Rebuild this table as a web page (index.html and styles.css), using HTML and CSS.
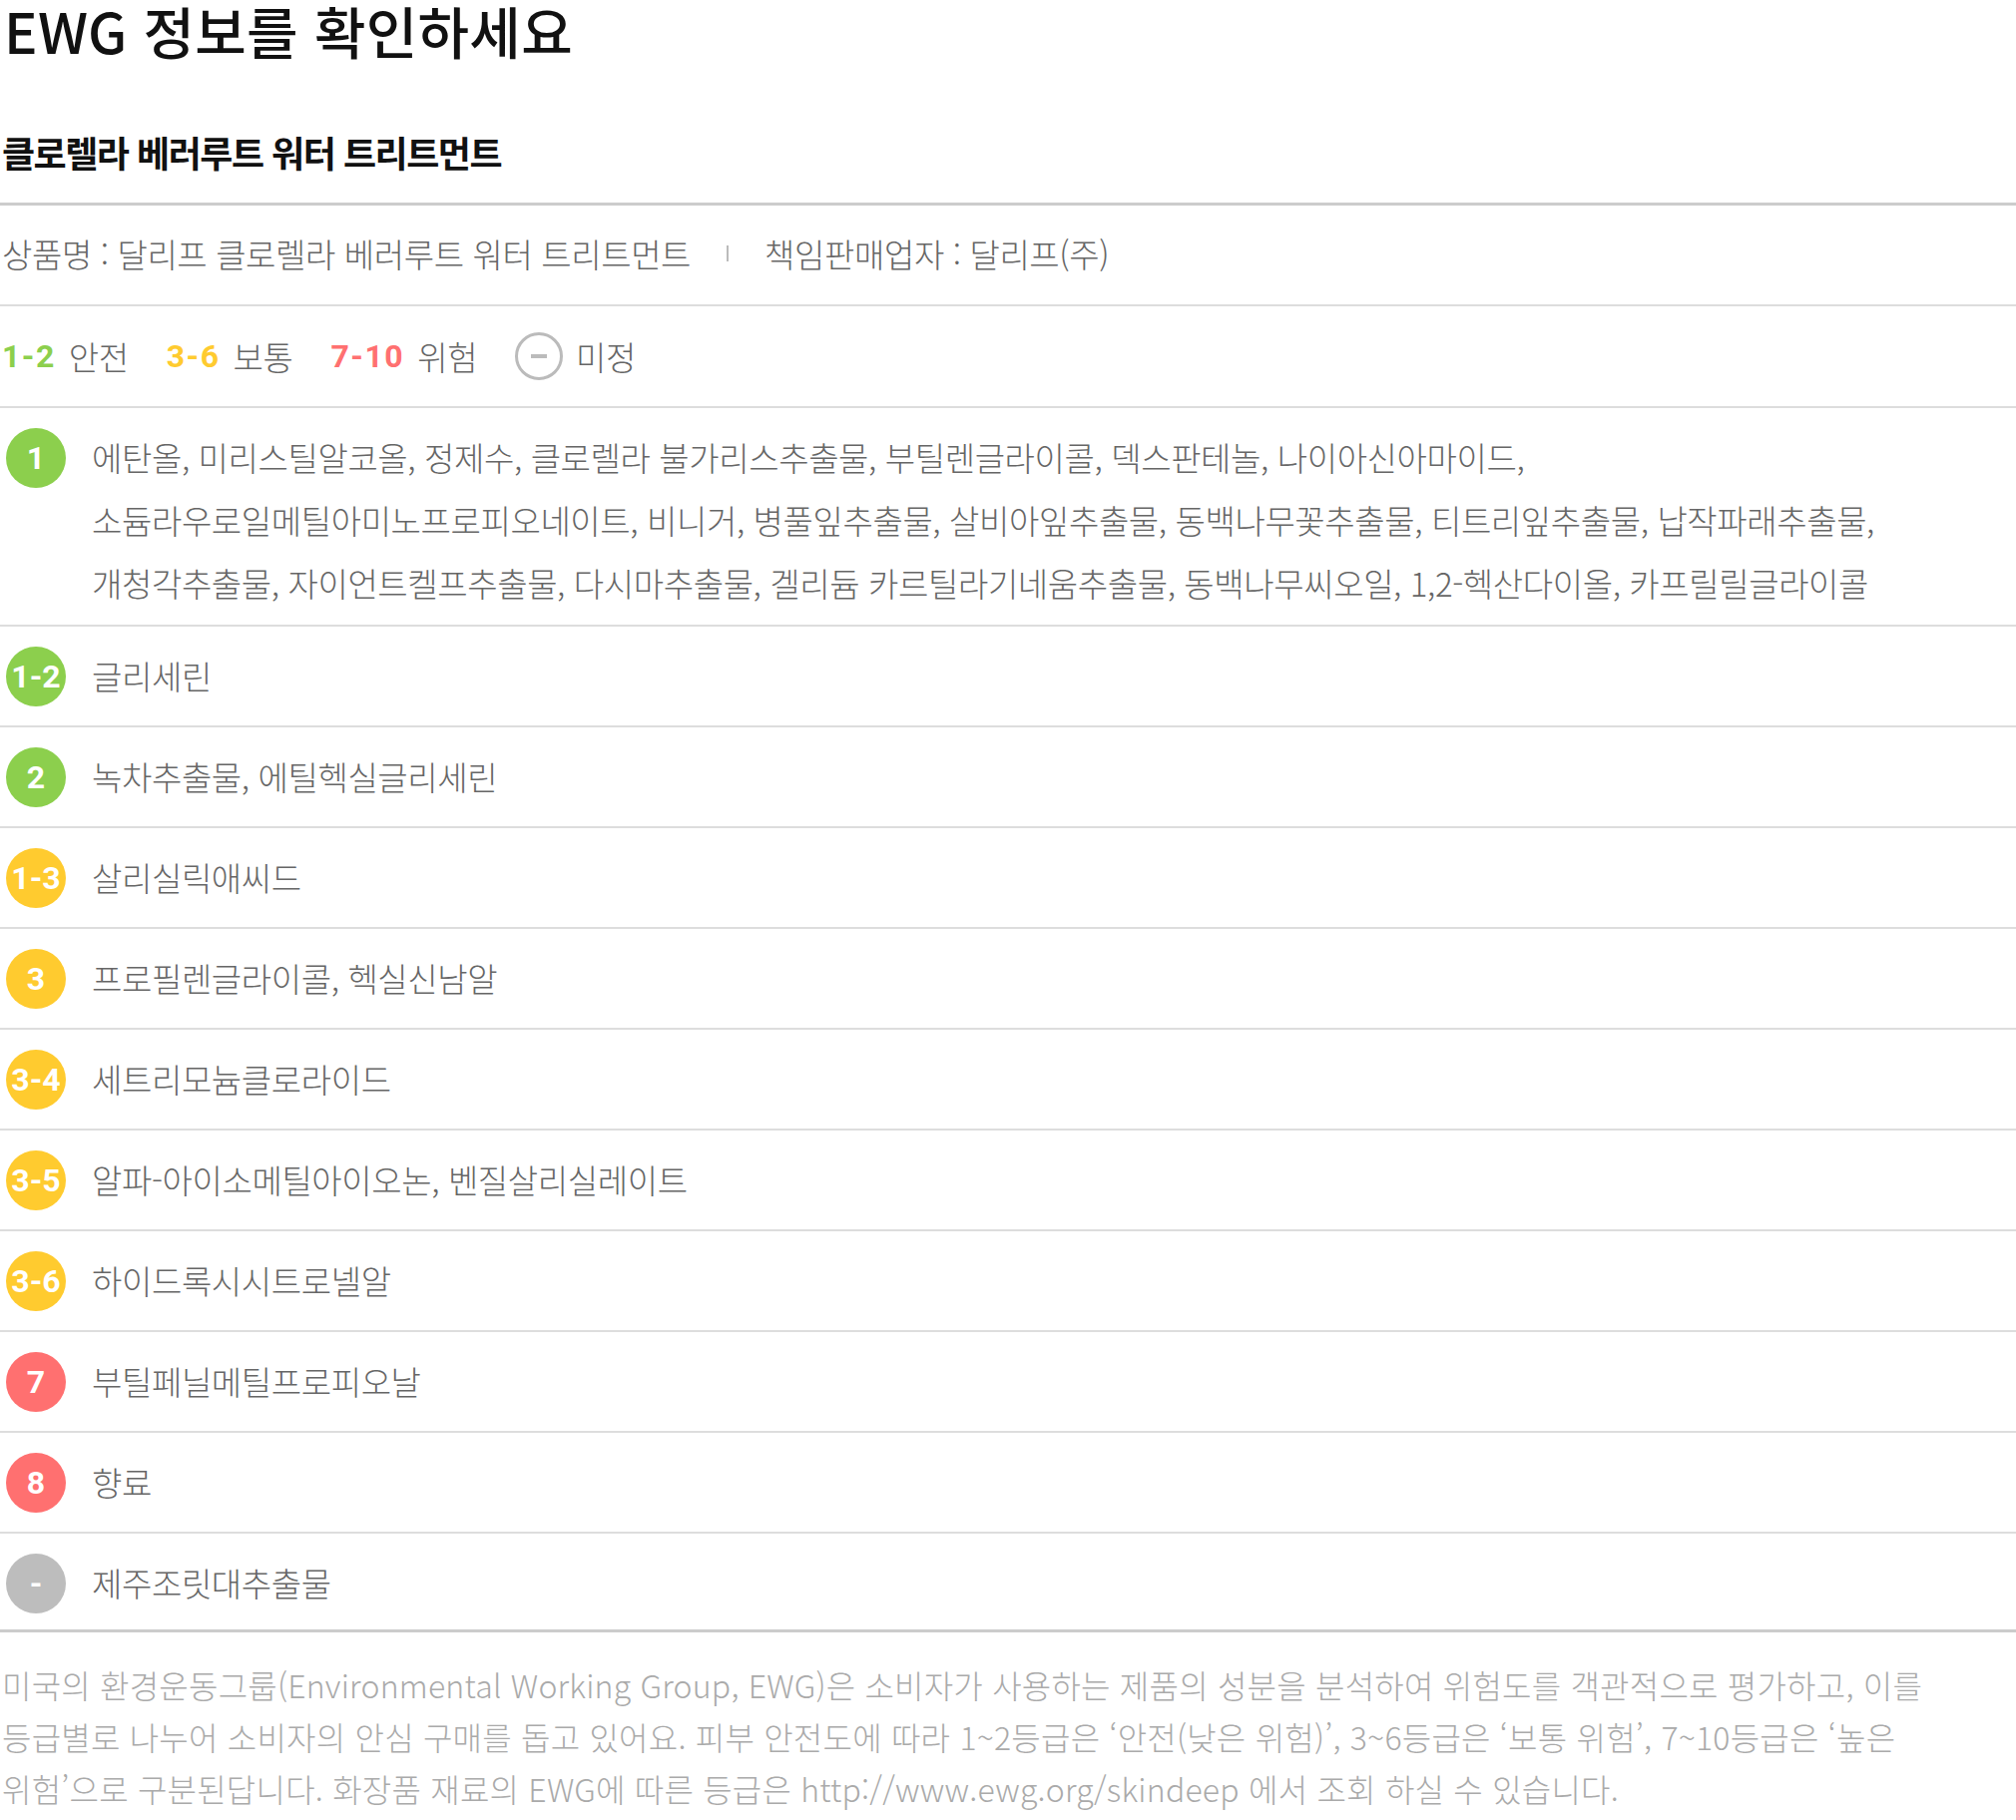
FILE: index.html
```html
<!DOCTYPE html>
<html lang="ko">
<head>
    <meta charset="UTF-8">
    <meta name="viewport" content="width=device-width, initial-scale=1.0">
    <title>EWG 정보</title>
    <link rel="stylesheet" href="styles.css">
</head>
<body>
    <div class="ewg">
        <h1 class="ewg-title">EWG 정보를 확인하세요</h1>
        <h2 class="product-name">클로렐라 베러루트 워터 트리트먼트</h2>

        <div class="product-info">
            <span>상품명 : 달리프 클로렐라 베러루트 워터 트리트먼트</span>
            <span class="divider"></span>
            <span>책임판매업자 : 달리프(주)</span>
        </div>

        <div class="legend">
            <span class="legend-item"><b class="legend-num safe">1-2</b>안전</span>
            <span class="legend-item"><b class="legend-num moderate">3-6</b>보통</span>
            <span class="legend-item"><b class="legend-num high">7-10</b>위험</span>
            <span class="legend-item"><i class="none-icon"></i>미정</span>
        </div>

        <ul class="ingredients">
            <li class="ingredient">
                <span class="grade grade-safe">1</span>
                <p class="ingredient-names">에탄올, 미리스틸알코올, 정제수, 클로렐라 불가리스추출물, 부틸렌글라이콜, 덱스판테놀, 나이아신아마이드, 소듐라우로일메틸아미노프로피오네이트, 비니거, 병풀잎추출물, 살비아잎추출물, 동백나무꽃추출물, 티트리잎추출물, 납작파래추출물, 개청각추출물, 자이언트켈프추출물, 다시마추출물, 겔리듐 카르틸라기네움추출물, 동백나무씨오일, 1,2-헥산다이올, 카프릴릴글라이콜</p>
            </li>
            <li class="ingredient">
                <span class="grade grade-safe">1-2</span>
                <p class="ingredient-names">글리세린</p>
            </li>
            <li class="ingredient">
                <span class="grade grade-safe">2</span>
                <p class="ingredient-names">녹차추출물, 에틸헥실글리세린</p>
            </li>
            <li class="ingredient">
                <span class="grade grade-moderate">1-3</span>
                <p class="ingredient-names">살리실릭애씨드</p>
            </li>
            <li class="ingredient">
                <span class="grade grade-moderate">3</span>
                <p class="ingredient-names">프로필렌글라이콜, 헥실신남알</p>
            </li>
            <li class="ingredient">
                <span class="grade grade-moderate">3-4</span>
                <p class="ingredient-names">세트리모늄클로라이드</p>
            </li>
            <li class="ingredient">
                <span class="grade grade-moderate">3-5</span>
                <p class="ingredient-names">알파-아이소메틸아이오논, 벤질살리실레이트</p>
            </li>
            <li class="ingredient">
                <span class="grade grade-moderate">3-6</span>
                <p class="ingredient-names">하이드록시시트로넬알</p>
            </li>
            <li class="ingredient">
                <span class="grade grade-high">7</span>
                <p class="ingredient-names">부틸페닐메틸프로피오날</p>
            </li>
            <li class="ingredient">
                <span class="grade grade-high">8</span>
                <p class="ingredient-names">향료</p>
            </li>
            <li class="ingredient">
                <span class="grade grade-none">-</span>
                <p class="ingredient-names">제주조릿대추출물</p>
            </li>
        </ul>

        <p class="ewg-note">미국의 환경운동그룹(Environmental Working Group, EWG)은 소비자가 사용하는 제품의 성분을 분석하여 위험도를 객관적으로 평가하고, 이를 등급별로 나누어 소비자의 안심 구매를 돕고 있어요. 피부 안전도에 따라 1~2등급은 ‘안전(낮은 위험)’, 3~6등급은 ‘보통 위험’, 7~10등급은 ‘높은 위험’으로 구분된답니다. 화장품 재료의 EWG에 따른 등급은 http://www.ewg.org/skindeep 에서 조회 하실 수 있습니다.</p>
    </div>
</body>
</html>
```

FILE: styles.css
```css
* {
    box-sizing: border-box;
    margin: 0;
    padding: 0;
}

body {
    font-family: "Noto Sans CJK KR", "Noto Sans", sans-serif;
    color: #666;
    background: #fff;
}

.ewg {
    width: 2020px;
}

.ewg-title {
    padding-left: 4px;
    font-size: 56px;
    font-weight: 500;
    line-height: 60px;
    letter-spacing: 0.3px;
    color: #111;
}

.product-name {
    margin-top: 72px;
    padding: 0 0 31px 2px;
    font-size: 36px;
    font-weight: 700;
    line-height: 40px;
    letter-spacing: -1.5px;
    color: #111;
    border-bottom: 3px solid #ccc;
}

.product-info {
    height: 101px;
    display: flex;
    align-items: center;
    padding: 0 0 3px 2px;
    font-size: 33px;
    font-weight: 300;
    letter-spacing: -0.4px;
    border-bottom: 2px solid #ddd;
}

.divider {
    width: 2px;
    height: 16px;
    margin: 0 36px;
    background: #bbb;
}

.legend {
    height: 102px;
    display: flex;
    align-items: center;
    gap: 38px;
    padding-left: 2px;
    font-size: 33px;
    font-weight: 300;
    letter-spacing: -0.4px;
    border-bottom: 2px solid #ddd;
}

.legend-item {
    display: flex;
    align-items: center;
    gap: 13px;
}

.legend-num {
    font-family: Roboto, sans-serif;
    font-size: 32px;
    font-weight: 700;
    letter-spacing: 1.5px;
}

.safe { color: #8ccf4d; }
.moderate { color: #ffcb2f; }
.high { color: #ff7070; }

.none-icon {
    width: 48px;
    height: 48px;
    border: 3px solid #bbb;
    border-radius: 50%;
    display: flex;
    align-items: center;
    justify-content: center;
}

.none-icon::after {
    content: "";
    width: 16px;
    height: 4px;
    background: #bbb;
}

.ingredients {
    list-style: none;
}

.ingredient {
    display: flex;
    align-items: flex-start;
    gap: 26px;
    padding: 20px 0 19px 6px;
    border-bottom: 2px solid #ddd;
}

.ingredient:last-child {
    padding-bottom: 16px;
    border-bottom: 3px solid #ccc;
}

.grade {
    flex: none;
    width: 60px;
    height: 60px;
    border-radius: 50%;
    display: flex;
    align-items: center;
    justify-content: center;
    font-family: Roboto, sans-serif;
    font-size: 32px;
    font-weight: 700;
    color: #fff;
}

.grade-safe { background: #8ccf4d; }
.grade-moderate { background: #ffcb2f; }
.grade-high { background: #ff7070; }
.grade-none { background: #bdbdbd; }

.ingredient-names {
    margin: -2px 0 -9px;
    font-size: 33px;
    font-weight: 300;
    line-height: 63px;
    letter-spacing: -0.4px;
    word-break: keep-all;
}

.ewg-note {
    padding: 26px 12px 0 2px;
    font-size: 32px;
    font-weight: 300;
    line-height: 52px;
    letter-spacing: 0.2px;
    color: #aaa;
    word-break: keep-all;
}
```
